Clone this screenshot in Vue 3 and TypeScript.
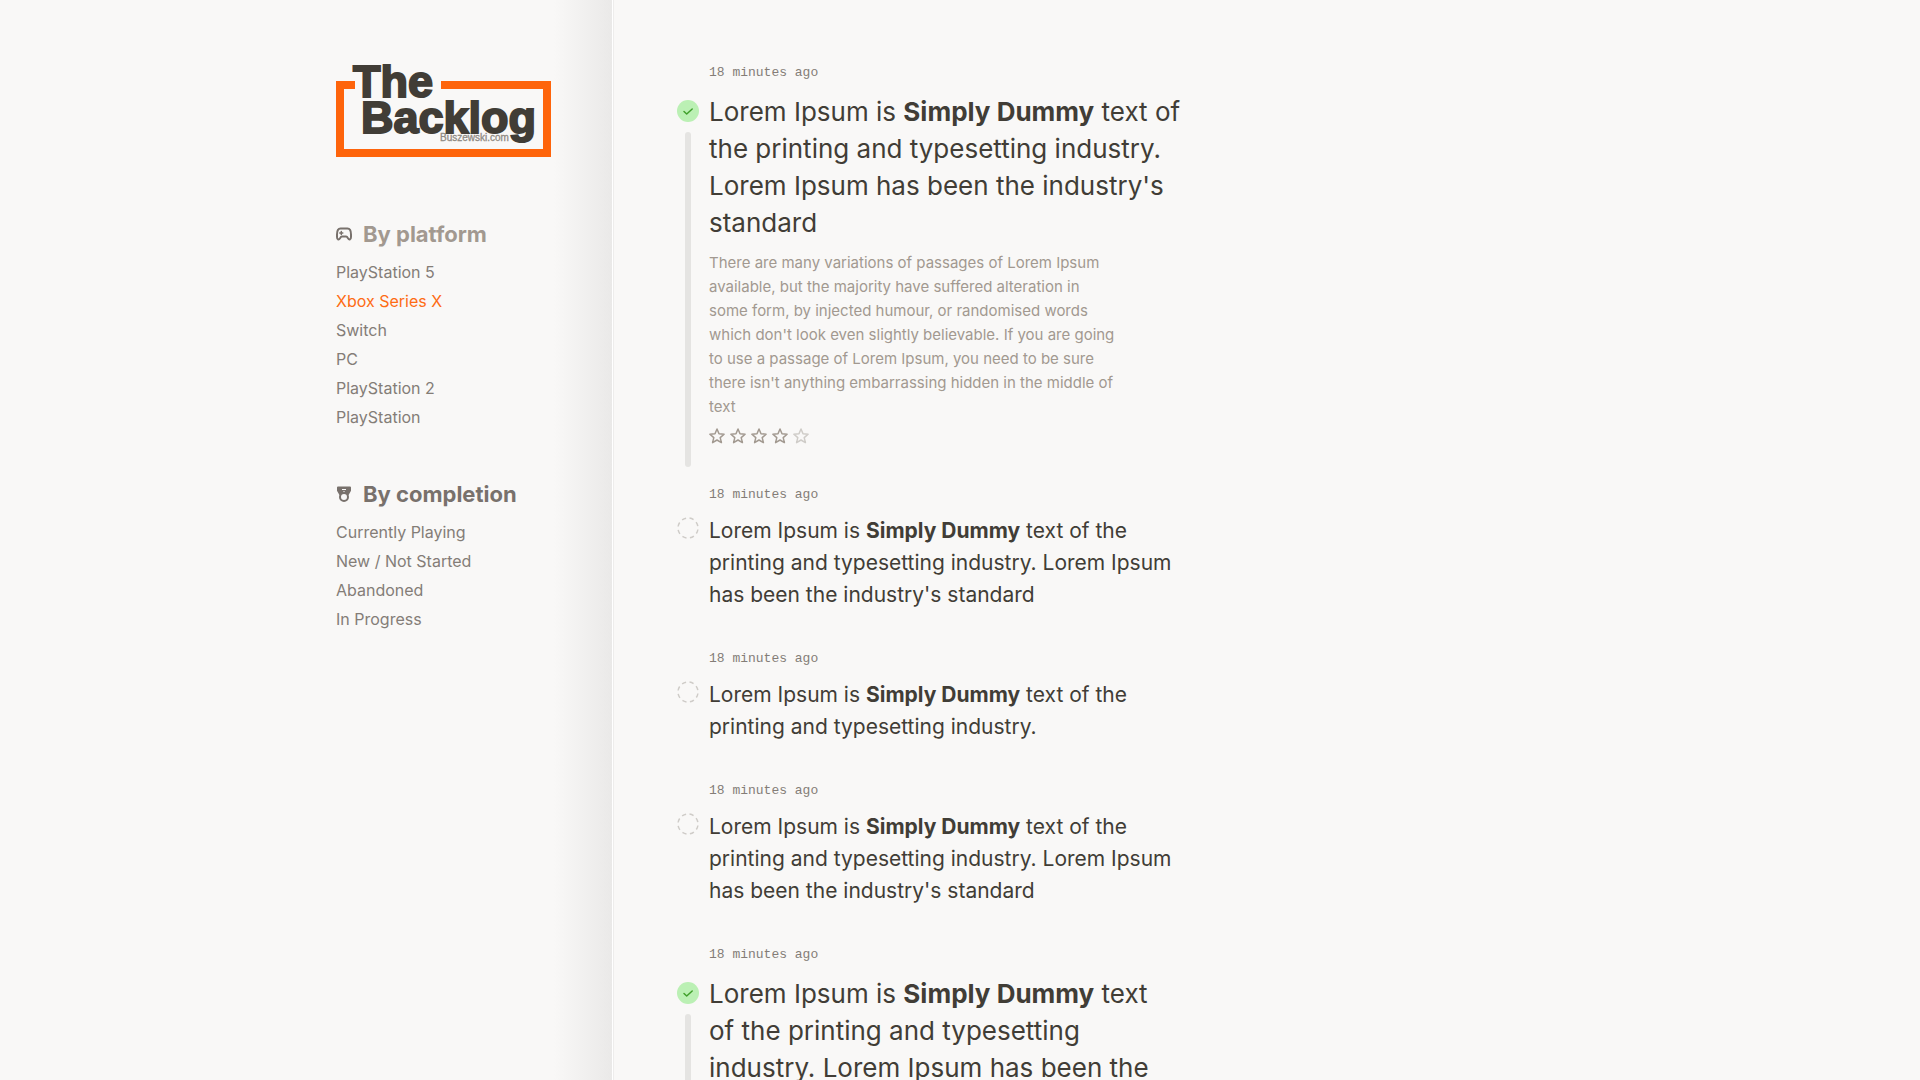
<script setup lang="ts">
interface NavLink { label: string; active?: boolean }
interface Entry { id: number; size: 'small' | 'medium' | 'large'; done: boolean; before: string; after: string; note?: string; rating?: number }

const platforms: NavLink[] = [
  { label: 'PlayStation 5' },
  { label: 'Xbox Series X', active: true },
  { label: 'Switch' },
  { label: 'PC' },
  { label: 'PlayStation 2' },
  { label: 'PlayStation' },
]
const completion: NavLink[] = [
  { label: 'Currently Playing' },
  { label: 'New / Not Started' },
  { label: 'Abandoned' },
  { label: 'In Progress' },
]

const note = "There are many variations of passages of Lorem Ipsum available, but the majority have suffered alteration in some form, by injected humour, or randomised words which don't look even slightly believable. If you are going to use a passage of Lorem Ipsum, you need to be sure there isn't anything embarrassing hidden in the middle of text"
const long = " text of the printing and typesetting industry. Lorem Ipsum has been the industry's standard"
const short = ' text of the printing and typesetting industry.'

const entries: Entry[] = [
  { id: 1, size: 'medium', done: true, before: 'Lorem Ipsum is ', after: long, note, rating: 4 },
  { id: 2, size: 'small', done: false, before: 'Lorem Ipsum is ', after: long },
  { id: 3, size: 'small', done: false, before: 'Lorem Ipsum is ', after: short },
  { id: 4, size: 'small', done: false, before: 'Lorem Ipsum is ', after: long },
  { id: 5, size: 'large', done: true, before: 'Lorem Ipsum is ', after: long, note, rating: 4 },
]
</script>

<template>
  <div class="page">
    <aside class="sidebar">
      <a href="#" class="logo" aria-label="The Backlog">
        <svg width="215" height="94" viewBox="0 0 215 94">
          <path d="M19 21H4v68h207V21H105" fill="none" stroke="#fe640b" stroke-width="8" />
          <text class="logo-site" x="104" y="77">Buszewski.com</text>
          <g class="logo-name">
            <text x="17" y="33">The</text>
            <text x="25" y="69">Backlog</text>
          </g>
        </svg>
      </a>
      <nav class="group" aria-labelledby="platform-title">
        <h2 id="platform-title" class="light">
          <svg width="16" height="16" viewBox="0 0 16 16" fill="none" stroke="#78716c" stroke-width="2" stroke-linecap="round" stroke-linejoin="round">
            <path d="M4.500 2.500h7C13.800 2.500 15 5 15 8.500V11c0 3-2 3-3 1.300-.6-1.100-1-1.800-2-1.800H6c-1 0-1.400.7-2 1.800C3 14 1 14 1 11V8.500c0-3.500 1.200-6 3.500-6z" />
            <path d="M3.800 7h3M5.300 5.500v3" stroke-width="1.500" />
          </svg>
          By platform
        </h2>
        <ul>
          <li v-for="link in platforms" :key="link.label"><a href="#" :class="{ active: link.active }">{{ link.label }}</a></li>
        </ul>
      </nav>
      <nav class="group" aria-labelledby="completion-title">
        <h2 id="completion-title">
          <svg width="16" height="16" viewBox="0 0 16 16" fill="none" stroke="#78716c" stroke-width="2" stroke-linejoin="round">
            <path d="M2 1.500h12v3L12 8H4L2 4.500z" fill="#78716c" />
            <path d="M6 3.500h4M7 6h2" stroke="#f9f8f7" stroke-width="1" />
            <circle cx="8" cy="11" r="4" fill="#f9f8f7" />
          </svg>
          By completion
        </h2>
        <ul>
          <li v-for="link in completion" :key="link.label"><a href="#">{{ link.label }}</a></li>
        </ul>
      </nav>
    </aside>

    <main class="feed">
      <article v-for="entry in entries" :key="entry.id" class="entry" :class="[entry.size, { done: entry.done }]">
        <time>18 minutes ago</time>
        <div class="marker">
          <svg v-if="entry.done" width="22" height="22" viewBox="0 0 22 22">
            <circle cx="11" cy="11" r="11" fill="#bbf0b4" />
            <path d="M7 11.500l2.700 2.500 5.500-5" fill="none" stroke="#40a02b" stroke-width="1.500" stroke-linecap="round" stroke-linejoin="round" />
          </svg>
          <svg v-else width="22" height="22" viewBox="0 0 22 22">
            <circle cx="11" cy="11" r="10" fill="none" stroke="#cfccc8" stroke-width="1.500" pathLength="80" stroke-dasharray="5.500 4.500" stroke-dashoffset="-2" />
          </svg>
          <span v-if="entry.done" class="rail"></span>
        </div>
        <div class="body">
          <h3>{{ entry.before }}<strong>Simply Dummy</strong>{{ entry.after }}</h3>
          <p v-if="entry.note">{{ entry.note }}</p>
          <div v-if="entry.rating" class="stars" role="img" :aria-label="`${entry.rating} out of 5`">
            <svg v-for="n in 5" :key="n" :class="{ off: n > entry.rating }" width="16" height="16" viewBox="0 0 16 16">
              <path d="M8 1l2 4.700 5.100.5-3.900 3.400 1.200 5L8 12l-4.400 2.600 1.200-5L.9 6.200 6 5.700z" />
            </svg>
          </div>
        </div>
      </article>
    </main>
  </div>
</template>

<style>
body { background: #f9f8f7; }
</style>

<style scoped>
.page {
  display: grid;
  grid-template-columns: 277px minmax(0, 1fr);
  max-width: 1248px;
  height: 100vh;
  margin: 0 auto;
  overflow: hidden;
  color: #413d36;
  font-family: Inter, "Liberation Sans", sans-serif;
}
.sidebar {
  padding: 64px 62px 0 0;
  border-right: 1px solid #fff;
  background: linear-gradient(to left, #eae9e8 0, #f9f8f7 58px);
  box-shadow: 1px 0 #eeedec;
}
.logo { display: block; height: 94px; margin-bottom: 60px; }
.logo svg { display: block; overflow: visible; }
.logo-name {
  fill: #413d36;
  stroke: #413d36;
  stroke-width: 2;
  font: bold 45px "Liberation Sans", sans-serif;
}
.logo-site { fill: #8f8a84; stroke: #8f8a84; stroke-width: 0.3; font: 10px "Liberation Sans", sans-serif; }
.group { margin-bottom: 46px; }
h2 {
  display: flex;
  align-items: center;
  gap: 11px;
  margin: 0 0 8px;
  color: #78716c;
  font-size: 22px;
  line-height: 32px;
}
h2.light { color: #a29990; }
ul { margin: 0; padding: 0; list-style: none; }
li { font-size: 16px; line-height: 29px; }
li a { color: #847d77; text-decoration: none; }
li a.active { color: #fe6c14; }
.feed { padding: 61px 0 0 64px; }
.entry {
  display: grid;
  grid-template-columns: 22px minmax(0, 485px);
  column-gap: 10px;
}
time {
  grid-column: 2;
  margin-bottom: 8px;
  color: #847d77;
  font: 13px/24px "Liberation Mono", monospace;
}
.marker { display: flex; flex-direction: column; align-items: center; gap: 10px; padding-top: 2px; }
.rail { width: 6px; flex: 1; border-radius: 3px; background: #e5e4e2; }
.body { padding-bottom: 36px; }
.done .marker { padding-top: 7px; }
.done .body { padding-bottom: 23px; }
.done { padding-bottom: 16px; }
h3 { margin: 0; font-weight: 400; font-size: 21px; line-height: 32px; }
.medium h3, .large h3 { font-size: 26px; line-height: 37px; }
.large h3 { max-width: 462px; }
p { max-width: 410px; margin: 10px 0 0; color: #a29990; font-size: 15px; line-height: 24px; }
.stars { display: flex; gap: 5px; margin-top: 9px; }
.stars path { fill: none; stroke: #a29990; stroke-width: 1.5; stroke-linejoin: round; }
.stars .off path { stroke: #cfccc8; }
</style>
